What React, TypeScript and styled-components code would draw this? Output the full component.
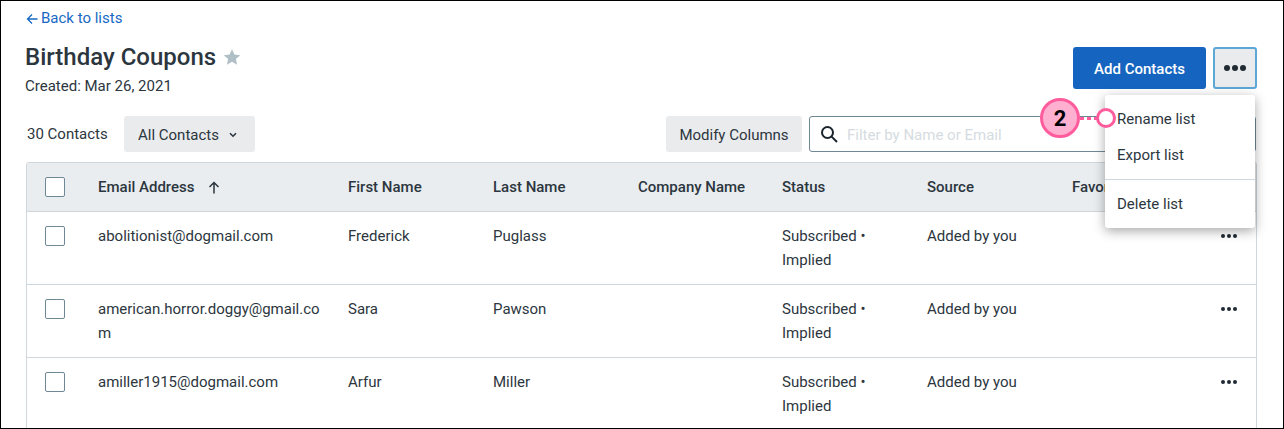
import React from "react";
import styled, { createGlobalStyle } from "styled-components";

const GlobalStyle = createGlobalStyle`
  html, body { margin: 0; padding: 0; background: #fff; }
  body { font-family: Roboto, "Liberation Sans", sans-serif; color: #2c363e; }
`;

const COLUMNS = "71px 250px 145px 145px 144px 145px 145px 1fr 35px";

const contacts = [
  { email: "abolitionist@dogmail.com", first: "Frederick", last: "Puglass" },
  { email: "american.horror.doggy@gmail.com", first: "Sara", last: "Pawson" },
  { email: "amiller1915@dogmail.com", first: "Arfur", last: "Miller" },
];

const App = () => {
  return (
    <>
      <GlobalStyle />
      <Page>
        <BackLink>
          <svg width="12" height="12" viewBox="0 0 12 12" fill="none" stroke="currentColor" strokeWidth="1.3">
            <path d="M11.5 6H1.5M6 1.5 1.5 6 6 10.5" />
          </svg>
          Back to lists
        </BackLink>
        <Header>
          <TitleBlock>
            <TitleRow>
              <Title>Birthday Coupons</Title>
              <svg width="18" height="18" viewBox="0 0 24 24" fill="#b0bec5">
                <path d="M12 1.5l3.2 7.2 7.8.8-5.9 5.2 1.7 7.7L12 18.4l-6.8 4 1.7-7.7L1 9.5l7.8-.8z" />
              </svg>
            </TitleRow>
            <Created>Created: Mar 26, 2021</Created>
          </TitleBlock>
          <HeaderActions>
            <PrimaryButton>Add Contacts</PrimaryButton>
            <MoreButton aria-label="More">
              <Dots $size={6} />
            </MoreButton>
          </HeaderActions>
        </Header>
        <Toolbar>
          <Count>30 Contacts</Count>
          <DropdownButton $width={131}>
            All Contacts
            <svg width="8" height="6" viewBox="0 0 8 6" fill="none" stroke="#2c363e" strokeWidth="1.6">
              <path d="M1 1.2 4 4.2l3-3" />
            </svg>
          </DropdownButton>
          <Spacer />
          <GreyButton $width={136}>Modify Columns</GreyButton>
          <SearchBox>
            <svg width="19" height="19" viewBox="0 0 19 19" fill="none" stroke="#1b242b" strokeWidth="2">
              <circle cx="7.5" cy="7.5" r="5.5" />
              <path d="M11.6 11.6 17 17" />
            </svg>
            <SearchInput placeholder="Filter by Name or Email" />
          </SearchBox>
        </Toolbar>
        <Table>
          <HeadRow>
            <CheckCell><Checkbox /></CheckCell>
            <HeadCell>
              Email Address
              <svg width="12" height="13" viewBox="0 0 12 13" fill="none" stroke="#2c363e" strokeWidth="1.5">
                <path d="M6 12.5V1.5M1.5 6 6 1.5 10.5 6" />
              </svg>
            </HeadCell>
            <HeadCell>First Name</HeadCell>
            <HeadCell>Last Name</HeadCell>
            <HeadCell>Company Name</HeadCell>
            <HeadCell>Status</HeadCell>
            <HeadCell>Source</HeadCell>
            <HeadCell>Favorite</HeadCell>
            <HeadCell />
          </HeadRow>
          {contacts.map((item) => (
            <Row key={item.email}>
              <RowCheckCell><Checkbox /></RowCheckCell>
              <EmailCell>{item.email}</EmailCell>
              <Cell>{item.first}</Cell>
              <Cell>{item.last}</Cell>
              <Cell />
              <Cell>Subscribed •<br />Implied</Cell>
              <Cell>Added by you</Cell>
              <Cell />
              <DotsCell><Dots $size={4} /></DotsCell>
            </Row>
          ))}
        </Table>
        <Menu>
          <MenuItem>Rename list</MenuItem>
          <MenuItem>Export list</MenuItem>
          <MenuDivider />
          <MenuItem>Delete list</MenuItem>
        </Menu>
        <Callout>
          <CalloutBadge>2</CalloutBadge>
          <CalloutLine />
          <CalloutRing />
        </Callout>
      </Page>
    </>
  );
};

export default App;

const Dots = ({ $size }: { $size: number }) => (
  <DotRow $size={$size}>
    <i />
    <i />
    <i />
  </DotRow>
);

const Page = styled.div`
  position: relative;
  box-sizing: border-box;
  width: 1284px;
  height: 429px;
  overflow: hidden;
  border: 1px solid #000;
  padding: 9px 26px 0 25px;
`;

const BackLink = styled.a`
  display: flex;
  align-items: center;
  gap: 3px;
  height: 17px;
  font-size: 15px;
  line-height: 17px;
  color: #1769c4;
`;

const Header = styled.div`
  display: flex;
  justify-content: space-between;
  margin-top: 13px;
  height: 76px;
`;

const TitleBlock = styled.div`
  margin-left: -1px;
`;

const TitleRow = styled.div`
  display: flex;
  align-items: center;
  gap: 7px;
  height: 34px;
`;

const Title = styled.h1`
  margin: 0;
  font-size: 24px;
  line-height: 34px;
  font-weight: 500;
  color: #2c363e;
`;

const Created = styled.div`
  margin-top: 2px;
  font-size: 15px;
  line-height: 20px;
`;

const HeaderActions = styled.div`
  display: flex;
  gap: 7px;
  margin-top: 7px;
`;

const PrimaryButton = styled.button`
  width: 133px;
  height: 42px;
  padding: 2px 0 0;
  border: 0;
  border-radius: 3px;
  background: #1565c0;
  color: #fff;
  font-family: inherit;
  font-size: 15px;
  font-weight: 500;
`;

const MoreButton = styled.button`
  display: flex;
  align-items: center;
  justify-content: center;
  box-sizing: border-box;
  width: 44px;
  height: 42px;
  padding: 0;
  border: 2px solid #5ba7d6;
  border-radius: 3px;
  background: #e9ebed;
`;

const DotRow = styled.span<{ $size: number }>`
  display: inline-flex;
  gap: 2px;
  i {
    display: block;
    width: ${(p) => p.$size}px;
    height: ${(p) => p.$size}px;
    border-radius: 50%;
    background: #1f2a33;
  }
`;

const Toolbar = styled.div`
  display: flex;
  align-items: center;
  height: 36px;
`;

const Count = styled.span`
  width: 98px;
  padding-left: 1px;
  box-sizing: border-box;
  font-size: 15px;
`;

const GreyButton = styled.button<{ $width: number }>`
  display: flex;
  align-items: center;
  justify-content: center;
  width: ${(p) => p.$width}px;
  height: 36px;
  padding: 2px 0 0;
  border: 0;
  border-radius: 3px;
  background: #e9ebed;
  color: #2c363e;
  font-family: inherit;
  font-size: 15px;
`;

const DropdownButton = styled(GreyButton)`
  justify-content: flex-start;
  gap: 10px;
  padding-left: 14px;
`;

const Spacer = styled.div`
  flex: 1;
`;

const SearchBox = styled.div`
  display: flex;
  align-items: center;
  gap: 8px;
  box-sizing: border-box;
  width: 447px;
  height: 36px;
  margin-left: 7px;
  margin-right: 1px;
  padding-left: 10px;
  border: 1px solid #6f8896;
  border-radius: 3px;
`;

const SearchInput = styled.input`
  flex: 1;
  border: 0;
  outline: 0;
  padding: 2px 0 0;
  font-family: inherit;
  font-size: 15px;
  &::placeholder {
    color: #d5dce1;
    opacity: 1;
  }
`;

const Table = styled.div`
  margin-top: 10px;
  border: 1px solid #ced7dd;
  border-bottom: 0;
  border-radius: 3px 3px 0 0;
`;

const HeadRow = styled.div`
  display: grid;
  grid-template-columns: ${COLUMNS};
  align-items: center;
  height: 48px;
  background: #e9edf0;
  border-bottom: 1px solid #ced7dd;
`;

const Row = styled.div`
  display: grid;
  grid-template-columns: ${COLUMNS};
  box-sizing: border-box;
  height: 73px;
  padding-top: 12px;
  border-bottom: 1px solid #ced7dd;
`;

const CheckCell = styled.div`
  padding-left: 18px;
`;

const RowCheckCell = styled(CheckCell)`
  display: flex;
  align-items: center;
  height: 24px;
`;

const Checkbox = styled.span`
  display: block;
  box-sizing: border-box;
  width: 20px;
  height: 20px;
  border: 1px solid #6f8896;
  border-radius: 2px;
  background: #fff;
`;

const HeadCell = styled.div`
  display: flex;
  align-items: center;
  gap: 13px;
  overflow: hidden;
  white-space: nowrap;
  font-size: 15px;
  font-weight: 500;
`;

const Cell = styled.div`
  font-size: 15px;
  line-height: 24px;
`;

const EmailCell = styled(Cell)`
  padding-right: 24px;
  word-break: break-all;
`;

const DotsCell = styled.div`
  display: flex;
  align-items: center;
  height: 24px;
`;

const Menu = styled.div`
  position: absolute;
  left: 1104px;
  top: 94px;
  width: 150px;
  height: 133px;
  padding-top: 6px;
  box-sizing: border-box;
  background: #fff;
  border-radius: 3px;
  box-shadow: 0 3px 12px rgba(0, 0, 0, 0.35);
`;

const MenuItem = styled.div`
  height: 36px;
  padding-left: 12px;
  font-size: 15px;
  line-height: 36px;
  color: #2c363e;
`;

const MenuDivider = styled.div`
  height: 1px;
  margin: 6px 0 6px;
  background: #ced7dd;
`;

const Callout = styled.div`
  position: absolute;
  left: 1039px;
  top: 97px;
  display: flex;
  align-items: center;
`;

const CalloutBadge = styled.div`
  display: flex;
  align-items: center;
  justify-content: center;
  box-sizing: border-box;
  width: 40px;
  height: 40px;
  border: 3px solid #ff5c9d;
  border-radius: 50%;
  background: #ffb0d0;
  color: #000;
  font-size: 22px;
  font-weight: 700;
`;

const CalloutLine = styled.div`
  width: 18px;
  height: 3px;
  background: repeating-linear-gradient(90deg, #ff5c9d 0 4px, transparent 4px 7px);
`;

const CalloutRing = styled.div`
  box-sizing: border-box;
  width: 20px;
  height: 20px;
  margin-left: -2px;
  border: 3px solid #ff5c9d;
  border-radius: 50%;
  background: #fff;
`;
